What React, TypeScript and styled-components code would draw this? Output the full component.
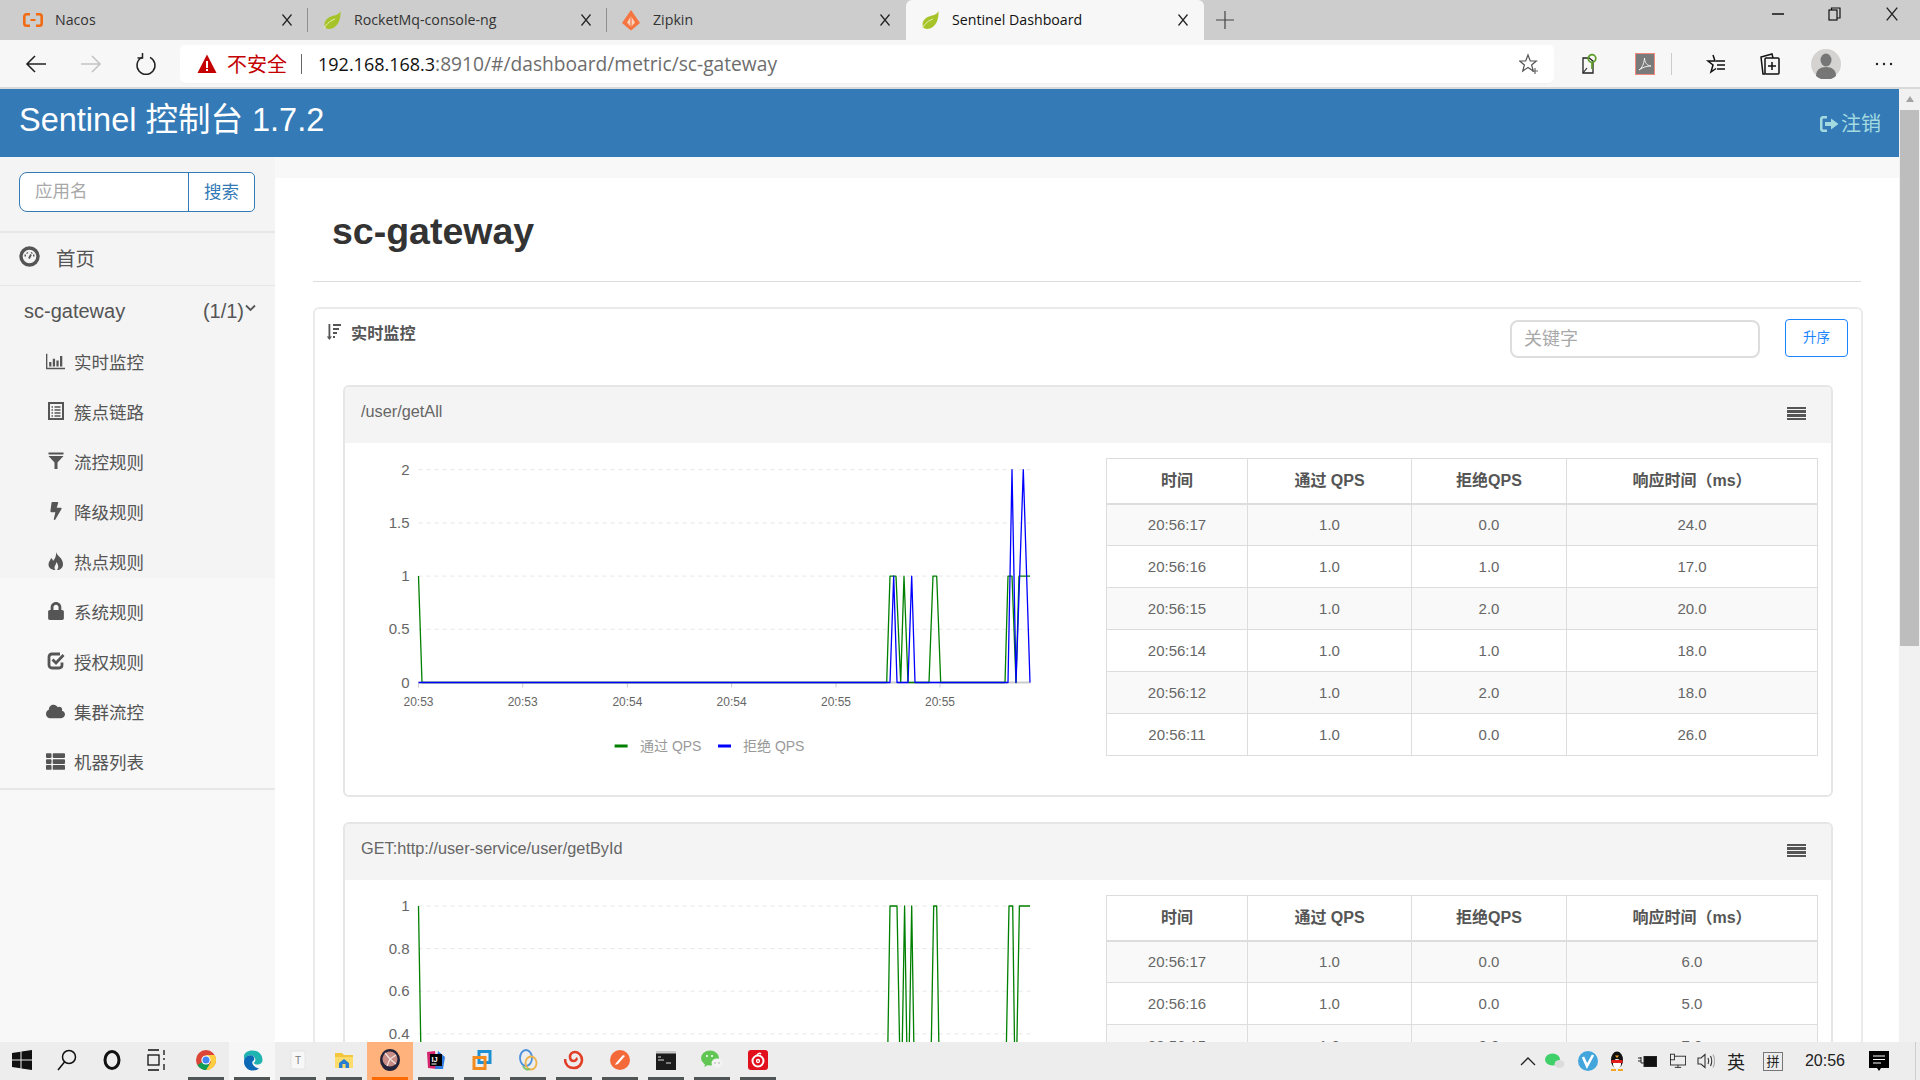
import React from 'react';
import styled, { createGlobalStyle } from 'styled-components';
import { FaBolt, FaLock, FaCloud, FaThList } from 'react-icons/fa';

const FONT = '"Liberation Sans", "Noto Sans CJK SC", sans-serif';
const UI_FONT = '"Open Sans", "Noto Sans CJK SC", sans-serif';

const Global = createGlobalStyle`
  html, body { margin: 0; padding: 0; height: 100%; overflow: hidden; background: #fff; }
  body { font-family: ${FONT}; color: #555; }
  * { box-sizing: border-box; }
`;

const Screen = styled.div`
  width: 1920px; height: 1080px; display: flex; flex-direction: column; overflow: hidden;
`;

/* browser chrome */
const TabStrip = styled.div`
  height: 40px; flex: none; background: #cdcdcd; display: flex; padding-left: 9px;
`;
const Tab = styled.div<{ $active?: boolean }>`
  width: ${p => (p.$active ? 298 : 299)}px; height: 40px; display: flex; align-items: center; padding-left: 14px;
  font-family: ${UI_FONT}; font-size: 14.2px; color: ${p => (p.$active ? '#111' : '#333')};
  background: ${p => (p.$active ? '#f7f7f7' : 'transparent')};
  border-radius: ${p => (p.$active ? '6px 6px 0 0' : '0')};
`;
const TabIcon = styled.span`
  width: 20px; height: 24px; margin-right: 12px; flex: none; display: flex; align-items: center; justify-content: center;
`;
const TabLabel = styled.span` flex: 1; white-space: nowrap; margin-bottom: 2px; `;
const TabClose = styled.span`
  width: 12px; height: 12px; margin-right: 14px; flex: none; display: flex;
`;
const TabSeparator = styled.span<{ $on?: boolean }>`
  width: 1px; height: 24px; flex: none; background: ${p => (p.$on ? '#8f8f8f' : 'transparent')};
`;
const NewTab = styled.div`
  width: 42px; display: flex; align-items: center; justify-content: center; color: #444;
`;
const WindowButtons = styled.div`
  margin-left: auto; display: flex; height: 28px; align-items: center;
`;
const WindowButton = styled.div`
  width: 57px; display: flex; justify-content: center; align-items: center;
`;

const AddressBar = styled.div`
  height: 49px; flex: none; background: #f7f7f7; border-bottom: 2px solid #d9d9d9; display: flex; align-items: center;
  padding: 0 0 0 8px;
`;
const NavButton = styled.div`
  width: 55px; display: flex; justify-content: center; align-items: center;
`;
const UrlBox = styled.div`
  width: 1374px; height: 38px; margin-left: 7px; background: #fff; border-radius: 5px; display: flex; align-items: center;
  padding: 0 15px 0 17px; box-shadow: 0 1px 1px rgba(0,0,0,.03);
`;
const NotSecure = styled.span`
  color: #c40000; font-size: 20px; margin-left: 10px; white-space: nowrap;
`;
const UrlDivider = styled.span` width: 1px; height: 20px; background: #666; margin: 0 16px 0 14px; `;
const UrlHost = styled.span` font-family: ${UI_FONT}; font-size: 18px; color: #111; white-space: nowrap; `;
const UrlPath = styled.span` font-family: ${UI_FONT}; font-size: 19.2px; color: #6d6d6d; white-space: nowrap; flex: 1; `;
const ToolIcons = styled.div` display: flex; align-items: center; margin-left: 8px; `;
const ToolSlot = styled.div<{ $w?: number }>`
  width: ${p => p.$w ?? 55}px; display: flex; justify-content: center; align-items: center;
`;
const ToolDivider = styled.div` width: 1px; height: 22px; background: #ccc; margin: 0 15px 0 -1px; `;

const Viewport = styled.div` flex: 1; min-height: 0; display: flex; `;
const Page = styled.div` flex: 1; min-width: 0; display: flex; flex-direction: column; overflow: hidden; `;
const Scrollbar = styled.div`
  width: 21px; flex: none; background: #f1f1f1; display: flex; flex-direction: column; align-items: center; padding-top: 7px;
`;
const ScrollArrow = styled.div`
  width: 0; height: 0; border-left: 4px solid transparent; border-right: 4px solid transparent; border-bottom: 6px solid #a3a3a3;
`;
const ScrollThumb = styled.div` width: 19px; height: 536px; margin-top: 8px; background: #bdbdbd; `;

/* app */
const Header = styled.header`
  height: 68px; flex: none; background: #337ab7; display: flex; align-items: flex-start; justify-content: space-between;
  padding: 12px 18px 0 19px;
`;
const Brand = styled.div` color: #fff; font-size: 32.5px; line-height: 38px; white-space: nowrap; `;
const Logout = styled.div`
  display: flex; align-items: center; color: #a3dae0; font-size: 20px; line-height: 24px; margin-top: 11px; gap: 2px;
`;
const Body = styled.div` flex: 1; min-height: 0; display: flex; `;
const Sidebar = styled.aside`
  width: 275px; flex: none; background: linear-gradient(#f4f4f4 421px, #f8f8f8 421px);
`;
const SearchGroup = styled.div`
  display: flex; height: 40px; width: 236px; margin: 15px 0 19px 19px; border: 1px solid #337ab7; border-radius: 8px 5px 5px 8px; background: #fff; overflow: hidden;
`;
const SearchInput = styled.div`
  flex: 1; padding-left: 15px; font-size: 17.5px; line-height: 36px; color: #a8a8a8; border-right: 1px solid #337ab7;
`;
const SearchButton = styled.div`
  width: 65px; text-align: center; font-size: 17.5px; line-height: 38px; color: #337ab7;
`;
const SideNav = styled.nav`
  border-top: 2px solid #e7e7e7; border-bottom: 2px solid #e7e7e7; padding-bottom: 2px;
`;
const HomeRow = styled.div`
  height: 53px; display: flex; align-items: center; border-bottom: 1px solid #e7e7e7; padding: 0 0 5px 19px; font-size: 19.5px; color: #555;
`;
const HomeLabel = styled.span` margin-left: 16px; margin-top: 2px; `;
const GroupRow = styled.div`
  height: 50px; display: flex; align-items: center; padding: 0 19px 0 24px; font-size: 20px; color: #555;
`;
const GroupCount = styled.span` margin-left: auto; `;
const Chevron = styled.svg` width: 11px; height: 8px; margin: 0 0 6px 1px; `;
const SideItem = styled.div`
  height: 50px; display: flex; align-items: center; font-size: 17.5px; color: #555; padding-left: 46px;
`;
const SideIcon = styled.span`
  width: 19px; display: flex; justify-content: center; margin-right: 9px; color: #555; font-size: 18px;
`;

const Main = styled.main` flex: 1; min-width: 0; background: #f8f8f8; padding-top: 21px; display: flex; `;
const Content = styled.div` flex: 1; min-width: 0; background: #fff; padding: 0 36px 0 38px; `;
const TitleBar = styled.div` height: 104px; margin-right: 2px; border-bottom: 1px solid #ddd; padding: 29px 0 0 19px; `;
const Title = styled.h1` margin: 0; font-size: 37.5px; line-height: 48px; font-weight: 700; color: #333; `;
const Panel = styled.section`
  margin-top: 25px; border: 2px solid #eaeaea; border-bottom: none; border-radius: 6px 6px 0 0; padding: 0 28px 0 28px;
`;
const PanelTop = styled.div` display: flex; align-items: flex-start; height: 76px; padding-top: 11px; margin: 0 -15px 0 -15px; `;
const PanelTitle = styled.div`
  display: flex; align-items: center; gap: 10px; font-size: 16.2px; font-weight: 700; color: #555; height: 26px; margin: -1px 0 0 -2px;
`;
const KeywordInput = styled.div`
  width: 250px; height: 38px; margin-left: auto; margin-right: -1px; border: 2px solid #ddd; border-radius: 8px; padding-left: 12px;
  color: #a8a8a8; font-size: 18px; line-height: 34px;
`;
const SortButton = styled.div`
  width: 63px; height: 38px; margin-left: 26px; margin-top: -1px; border: 1px solid #1a85ff; border-radius: 4px; color: #1a85ff;
  text-align: center; font-size: 13.5px; line-height: 36px;
`;
const Card = styled.article`
  border: 2px solid #e6e6e6; border-radius: 6px; margin-bottom: 25px;
`;
const CardHead = styled.div`
  height: 56px; background: #f4f4f4; display: flex; align-items: center; justify-content: space-between; padding: 0 25px 7px 16px;
  font-size: 16.3px; color: #666; border-radius: 4px 4px 0 0;
`;
const Hamburger = styled.div`
  width: 19px; height: 14px; display: flex; flex-direction: column; justify-content: space-between; margin-top: 4px;
`;
const HamburgerBar = styled.span` height: 2.5px; background: #555; `;
const CardBody = styled.div` display: flex; padding: 15px 11px 39px 0; align-items: flex-start; `;
const ChartSlot = styled.div` width: 761px; flex: none; height: 297px; position: relative; `;
const ChartSvg = styled.svg` position: absolute; left: 0; top: -15px; overflow: visible; `;
const Table = styled.table`
  width: 712px; border-collapse: collapse; table-layout: fixed; font-size: 15px; color: #666; text-align: center;
`;
const Th = styled.th<{ $w?: number }>`
  height: 45px; border: 1px solid #ddd; border-bottom: 2px solid #ddd; padding: 0 0 3px; font-size: 16px; font-weight: 700; color: #555;
  width: ${p => (p.$w ? `${p.$w}px` : 'auto')};
`;
const Tr = styled.tr<{ $odd: boolean }>` background: ${p => (p.$odd ? '#f9f9f9' : '#fff')}; `;
const Td = styled.td` height: 42px; border: 1px solid #ddd; padding: 0; `;

/* taskbar */
const Taskbar = styled.div` height: 38px; flex: none; background: #ededed; display: flex; `;
const StartSlot = styled.div`
  width: 45px; display: flex; align-items: center; justify-content: center; padding: 0 1px 2px 0;
`;
const Apps = styled.div` display: flex; margin-left: 3px; `;
const AppSlot = styled.div<{ $state?: 'active' | 'light' }>`
  width: 46px; display: flex; align-items: center; justify-content: center; position: relative; padding-bottom: 2px;
  background: ${p => (p.$state === 'active' ? '#ffb27c' : p.$state === 'light' ? '#f6f6f6' : 'transparent')};
`;
const RunBar = styled.span<{ $orange?: boolean }>`
  position: absolute; left: 5px; right: 5px; bottom: 0; height: 3px; background: ${p => (p.$orange ? '#ff6a00' : '#4f5554')};
`;
const Tray = styled.div`
  margin-left: auto; display: flex; align-items: center; padding-right: 4px; color: #222;
`;
const TraySlot = styled.div<{ $w: number; $size?: number }>`
  width: ${p => p.$w}px; display: flex; justify-content: center; align-items: center; font-size: ${p => p.$size ?? 15}px; white-space: nowrap;
`;
const TrayEdge = styled.span` width: 1px; height: 38px; background: #cfcfcf; margin-left: 7px; `;
const ImeBox = styled.span`
  width: 20px; height: 19px; border: 1px solid #777; font-size: 13px; line-height: 17px; text-align: center; display: block;
`;
const ImeLang = styled.span` font-size: 18px; `;

/* icons */
const Leaf = () => (
  <svg width="21" height="20" viewBox="0 0 20 20">
    <path d="M18.5 1C17 5 13 5 9 6.5 4 8.5 1.5 12 3 17c1 2 4 2.500 7 1.500 6-2 9-9 8.500-17.500z" fill="#a6c42a" />
    <path d="M2 18.500C5 13 9 10.500 13 9" stroke="#e9f0b5" strokeWidth="1" fill="none" />
  </svg>
);
const NacosIcon = () => (
  <svg width="20" height="14" viewBox="0 0 20 14" fill="none" stroke="#f26a12" strokeWidth="2.600">
    <path d="M7 1.300H3.500c-1.200 0-2.200 1-2.200 2.200v7c0 1.200 1 2.200 2.200 2.200H7M13 1.300h3.500c1.200 0 2.200 1 2.200 2.200v7c0 1.200-1 2.200-2.200 2.200H13" />
    <path d="M7.500 7h5" strokeWidth="2" />
  </svg>
);
const ZipkinIcon = () => (
  <svg width="20" height="22" viewBox="0 0 20 22">
    <path d="M10 1l9 13-9 7.500L1 14z" fill="#f5743f" />
    <path d="M10 7l4 6.500-4 4.500-4-4.500z" fill="#fbd3bf" />
    <path d="M10 6v13" stroke="#f5743f" strokeWidth="1.200" />
  </svg>
);
const Cross = ({ c = '#333', s = 12 }: { c?: string; s?: number }) => (
  <svg width={s} height={s} viewBox="0 0 12 12" stroke={c} strokeWidth="1.200"><path d="M1.500 0.500l9 11M10.500 0.500l-9 11" /></svg>
);
const ArrowL = ({ c = '#222' }: { c?: string }) => (
  <svg width="22" height="20" viewBox="0 0 22 20" fill="none" stroke={c} strokeWidth="1.600"><path d="M21 10H2M10 2l-8 8 8 8" /></svg>
);
const ArrowR = ({ c = '#c4c4c4' }: { c?: string }) => (
  <svg width="22" height="20" viewBox="0 0 22 20" fill="none" stroke={c} strokeWidth="1.600"><path d="M1 10h19M12 2l8 8-8 8" /></svg>
);
const Refresh = () => (
  <svg width="22" height="24" viewBox="0 0 22 24" fill="none" stroke="#222" strokeWidth="1.500">
    <path d="M7 5.300a9 9 0 1 0 8 0" /><path d="M7.500 1v5H2.500" />
  </svg>
);
const WarnTriangle = () => (
  <svg width="20" height="20" viewBox="0 0 20 20">
    <path d="M10 0.500l9.500 18.500H0.500z" fill="#c40000" />
    <path d="M9 7h2v7H9zM9 15h2v2H9z" fill="#fff" />
  </svg>
);
const StarPlus = () => (
  <svg width="20" height="22" viewBox="0 0 20 22" fill="none" stroke="#555" strokeWidth="1.200">
    <path d="M9 2l2.300 6h6l-4.700 4 1.700 6-5.300-3.500L3.700 18l1.700-6L0.700 8h6z" />
    <path d="M16 15v6M13 18h6" stroke="#666" />
  </svg>
);
const ProfileKey = () => (
  <svg width="18" height="24" viewBox="0 0 18 24" fill="none">
    <path d="M2 6h6l4 3v12H2z" stroke="#222" strokeWidth="1.300" />
    <circle cx="11" cy="6.500" r="3.800" stroke="#5b9b25" strokeWidth="1.700" />
    <path d="M11 10.500V17" stroke="#5b9b25" strokeWidth="1.700" />
    <path d="M2 21l4-5" stroke="#222" strokeWidth="1.200" />
  </svg>
);
const PdfIcon = () => (
  <svg width="20" height="22" viewBox="0 0 20 22">
    <rect x="0.500" y="0.500" width="19" height="21" fill="#7a7a7a" stroke="#f08a7a" />
    <path d="M4 17c3-2 5-6 5.500-12 .3 5 2.500 7.500 6.500 8-4 0-8 1-12 4z" fill="none" stroke="#eee" strokeWidth="1" />
  </svg>
);
const FavList = () => (
  <svg width="22" height="22" viewBox="0 0 22 22" fill="none" stroke="#111" strokeWidth="1.500">
    <path d="M9 2l2 6h-7l5 4-2 7 5-3.500" />
    <path d="M12 8h9M13 12h8M13 16h8" />
  </svg>
);
const Collections = () => (
  <svg width="22" height="24" viewBox="0 0 22 24" fill="none" stroke="#111" strokeWidth="1.500">
    <rect x="6" y="6" width="14" height="16" rx="1" />
    <path d="M13 10v8M9 14h8" />
    <path d="M6 22H4L2 5l11-3 1 4" />
  </svg>
);
const Avatar = () => (
  <svg width="30" height="30" viewBox="0 0 30 30">
    <circle cx="15" cy="15" r="15" fill="#d4d3d1" />
    <ellipse cx="15" cy="11" rx="5.500" ry="6.500" fill="#767676" />
    <path d="M5 27c0-6 4-9 10-9s10 3 10 9a15 15 0 0 1-20 0z" fill="#767676" />
  </svg>
);
const Dots = () => (
  <svg width="18" height="4" viewBox="0 0 18 4" fill="#222">
    <circle cx="2" cy="2" r="1.200" /><circle cx="9" cy="2" r="1.200" /><circle cx="16" cy="2" r="1.200" />
  </svg>
);
const LogoutIcon = () => (
  <svg width="20" height="18" viewBox="0 0 20 18" fill="#a3dae0">
    <path d="M8 1H4C2 1 1 2.500 1 4v10c0 1.500 1 3 3 3h4v-2.500H4.500c-.6 0-1-.4-1-1v-9c0-.6.4-1 1-1H8z" />
    <path d="M12 3.500L19.500 9 12 14.500V11H6V7h6z" />
  </svg>
);
const GaugeIcon = () => (
  <svg width="21" height="21" viewBox="0 0 21 21">
    <circle cx="10.500" cy="10.500" r="8.500" fill="#f4f4f4" stroke="#555" strokeWidth="3.400" />
    <path d="M5.500 9.500h1.500M8 6.500l.6 1M13 6.500l-.6 1M15.500 9.500H14" stroke="#555" strokeWidth="1.800" />
    <path d="M10 12.500l2-4" stroke="#555" strokeWidth="1.800" />
  </svg>
);
const StatsIcon = () => (
  <svg width="21" height="17" viewBox="0 0 21 17" fill="#555">
    <path d="M0 0h1.500v15.500H21V17H0z" />
    <path d="M3.500 9h2.500v5H3.500zM7.500 5.500H10V14H7.500zM11.500 7.500H14V14h-2.500zM15.500 2.500H18V14h-2.500z" />
  </svg>
);
const ListAltIcon = () => (
  <svg width="16" height="18" viewBox="0 0 16 18" fill="none" stroke="#555">
    <rect x="1" y="1" width="14" height="16" strokeWidth="2" />
    <path d="M3.500 5h1.500M3.500 8h1.500M3.500 11h1.500M3.500 14h1.500M6.500 5h6M6.500 8h6M6.500 11h6M6.500 14h6" strokeWidth="1.500" />
  </svg>
);
const FunnelIcon = () => (
  <svg width="16" height="18" viewBox="0 0 16 18" fill="#555">
    <path d="M0.500 0.500h15v2h-15z" />
    <path d="M0.500 4h15L9.500 10.500V17h-3v-6.500z" />
  </svg>
);
const FlameIcon = () => (
  <svg width="16" height="18" viewBox="0 0 16 18" fill="#555">
    <path d="M8 0c1 4 7 6 7 12 0 4-3 6-6 6 1.500-2 2-4-.5-8-.5 3-2 3.500-2 5.500 0 1 .5 2 1 2.500-4.500 0-7-2.500-7-5.500 0-3 2-4 2.500-6.500C4.500 7 5 8 5 9c2-2 3.500-5 3-9z" />
  </svg>
);
const CheckIcon = () => (
  <svg width="18" height="18" viewBox="0 0 18 18" fill="none" stroke="#555">
    <path d="M15 10.500V13c0 1.500-1 3-3 3H5c-2 0-3-1.500-3-3V5c0-2 1-3 3-3h8" strokeWidth="2.800" />
    <path d="M5.500 7.500L9 11l7.500-8" strokeWidth="2.800" />
  </svg>
);
const SortIcon = () => (
  <svg width="15" height="16" viewBox="0 0 15 16" fill="#555">
    <path d="M2.500 0h1.800v12.500H6L3.400 16 .8 12.500h1.700zM7 0h8v2H7zM7 4h6v2H7zM7 8h4v2H7zM7 12h2v2H7z" />
  </svg>
);

const AppIcons: React.ReactNode[] = [
  <svg key="chrome" width="20" height="20" viewBox="0 0 20 20"><circle cx="10" cy="10" r="10" fill="#db4437"/><path d="M10 10L1.300 15a10 10 0 0 0 13.700 3.600z" fill="#0f9d58"/><path d="M10 5h8.700A10 10 0 0 1 10 20l5-8z" fill="#ffcd40"/><circle cx="10" cy="10" r="4.600" fill="#fff"/><circle cx="10" cy="10" r="3.500" fill="#4285f4"/></svg>,
  <svg key="edge" width="21" height="21" viewBox="0 0 21 21"><path d="M10.500 0.500c6 0 10 4.500 10 9.500 0 3-2.500 4.500-5 4.500-2 0-4-1-3.500-2 1.500-1 2-3 .5-5-1-1.500-3-2.500-5-2C5 5.500 3 8 2.500 10 2 8 1 4.500 4 2.500 6 1 8 .5 10.500 .5z" fill="#1fb4b0"/><path d="M2.500 9c2-4 7-5 9-2.500 1.500 2 .5 4-1 5-1 2 1 5.500 6.500 7-2 1.500-4 2-6 2C5 20.500 0.500 15 2.500 9z" fill="#0c69b5"/></svg>,
  <svg key="t" width="18" height="20" viewBox="0 0 18 20"><rect x="2" y="1" width="14" height="18" fill="#f7f7f7" stroke="#e4e4e4"/><text x="9" y="14" textAnchor="middle" fontSize="10" fontFamily={FONT} fill="#777">T</text></svg>,
  <svg key="folder" width="20" height="20" viewBox="0 0 20 20"><path d="M1 3h7l2 2h9v13H1z" fill="#f5c63d"/><path d="M1 7h18v11H1z" fill="#fbdc6d"/><path d="M5 13l5-4 5 4v5H5z" fill="#2a7fd1"/><path d="M8.500 14h3v4h-3z" fill="#fbdc6d"/></svg>,
  <svg key="avatar" width="20" height="22" viewBox="0 0 20 22"><ellipse cx="10" cy="11" rx="10" ry="11" fill="#23233a"/><circle cx="10" cy="10" r="7.500" fill="#c98d85"/><path d="M10 10L5 4M10 10l6-4M10 10l-3 7M10 10l6 5" stroke="#efe3df" strokeWidth="1.200"/></svg>,
  <svg key="idea" width="20" height="20" viewBox="0 0 20 20"><path d="M1 2l8-1 2 18-9-1z" fill="#d6246e"/><path d="M12 1l7 6-2 12-8 0z" fill="#2d7be0"/><path d="M4 4h12v12H4z" fill="#000"/><text x="5.500" y="11.500" fontSize="7.500" fontWeight="700" fontFamily={FONT} fill="#fff">IJ</text><path d="M5.500 13.500h5v1h-5z" fill="#fff"/></svg>,
  <svg key="vm" width="20" height="20" viewBox="0 0 20 20" fill="none"><rect x="7" y="1.500" width="11" height="11" stroke="#1d8fd4" strokeWidth="3"/><rect x="2" y="7.500" width="11" height="11" stroke="#f28c1e" strokeWidth="3"/></svg>,
  <svg key="nav" width="20" height="22" viewBox="0 0 20 22" fill="none" strokeWidth="1.800"><ellipse cx="8" cy="9" rx="6" ry="8" stroke="#4a8fdc"/><ellipse cx="13" cy="14" rx="5.500" ry="6.500" stroke="#ecb44a"/><path d="M5 17a5 5 0 0 0 7 3" stroke="#7cc36c"/></svg>,
  <svg key="snail" width="20" height="20" viewBox="0 0 20 20" fill="none"><path d="M1 9c0 6 4 9 9 9 5 0 8-4 8-8S15 2 11 2C8 2 6 4 6 7s2 4 4 4 3-2 2-3" stroke="#e23d25" strokeWidth="2.600"/></svg>,
  <svg key="postman" width="20" height="20" viewBox="0 0 20 20"><circle cx="10" cy="10" r="10" fill="#f4693a"/><path d="M5 15l3-1 7-8-2-1-7 8z" fill="#fff"/></svg>,
  <svg key="term" width="20" height="19" viewBox="0 0 20 19"><rect width="20" height="19" fill="#1c1c1c"/><rect width="20" height="2.500" fill="#c9c9c9"/><path d="M2 6h3M2 9h6M10 12h5" stroke="#ddd" strokeWidth="1"/></svg>,
  <svg key="wechat" width="22" height="20" viewBox="0 0 22 20"><ellipse cx="9" cy="8" rx="9" ry="7.500" fill="#62c654"/><path d="M4 13l-.5 4 4-2.500z" fill="#62c654"/><ellipse cx="16" cy="13" rx="5.500" ry="4.500" fill="#f3f3f3"/><circle cx="14" cy="13" r=".8" fill="#aaa"/><circle cx="18" cy="13" r=".8" fill="#aaa"/><circle cx="6" cy="6" r="1" fill="#fff"/><circle cx="11" cy="6" r="1" fill="#fff"/></svg>,
  <svg key="netease" width="20" height="20" viewBox="0 0 20 20"><rect width="20" height="20" rx="3" fill="#e1101c"/><circle cx="10" cy="11" r="5.500" fill="none" stroke="#fff" strokeWidth="2"/><circle cx="10" cy="11" r="1.500" fill="none" stroke="#fff" strokeWidth="1.300"/><path d="M9 5c1-2 3-2 4-1" fill="none" stroke="#fff" strokeWidth="1.500"/></svg>,
];

/* charts */
const GX0 = 418.5;
type Pt = [number, number];

const green1: Pt[] = [[418.5, 1], [422, 0], [886.7, 0], [890, 1], [896, 1], [900.7, 0], [904, 1], [908, 0], [929, 0], [933, 1], [936.7, 1], [940.7, 0], [1005, 0], [1008, 1], [1012, 1], [1016, 0], [1019, 1], [1030, 1]];
const blue1: Pt[] = [[418.5, 0], [890, 0], [893.7, 1], [897, 0], [908, 0], [911.7, 1], [915, 0], [1008, 0], [1012, 2], [1016, 0], [1023.3, 2], [1030, 0]];
const green2: Pt[] = [[418.5, 1], [422, 0], [886.7, 0], [890, 1], [897, 1], [901, 0], [904.6, 1], [908, 0], [911.7, 1], [915, 0], [930, 0], [933.7, 1], [936.7, 1], [940, 0], [1005, 0], [1009, 1], [1012.7, 1], [1015.5, 0], [1019.4, 1], [1030, 1]];

const LABEL = { fontFamily: FONT };
const xTicks = [418.5, 522.7, 627.4, 731.6, 836, 940];
const xLabels = ['20:53', '20:53', '20:54', '20:54', '20:55', '20:55'];

const Chart = ({ yTicks, unit, zero, green, blue, showAxis }: { yTicks: number[]; unit: number; zero: number; green: Pt[]; blue?: Pt[]; showAxis: boolean }) => {
  const X = (v: number) => v - 343 - 2;
  const Y = (v: number) => zero - v * unit;
  const line = (pts: Pt[]) => pts.map(([x, v]) => `${X(x)},${Y(v)}`).join(' ');
  return (
    <ChartSvg width="761" height="350" viewBox="0 0 761 350">
      {yTicks.filter(v => v !== 0).map(v => (
        <line key={v} x1={X(GX0)} x2={X(1030.5)} y1={Y(v)} y2={Y(v)} stroke="#e6e6e6" strokeDasharray="4 4" />
      ))}
      {yTicks.map(v => (
        <text key={v} x={X(GX0) - 9} y={Y(v) + 5} textAnchor="end" fontSize="15" fill="#666" style={LABEL}>{v}</text>
      ))}
      {showAxis && (
        <>
          <line x1={X(GX0)} x2={X(1030.5)} y1={zero} y2={zero} stroke="#ccc" strokeWidth="2" />
          {xTicks.map((x, i) => (
            <g key={i}>
              <line x1={X(x)} x2={X(x)} y1={zero} y2={zero + 5} stroke="#ccc" />
              <text x={X(x)} y={zero + 23} textAnchor="middle" fontSize="12" fill="#666" style={LABEL}>{xLabels[i]}</text>
            </g>
          ))}
        </>
      )}
      <polyline points={line(green)} fill="none" stroke="#008000" strokeWidth="1.300" strokeLinejoin="round" />
      {blue && <polyline points={line(blue)} fill="none" stroke="#0000ff" strokeWidth="1.300" strokeLinejoin="round" />}
      {showAxis && (
        <>
          <rect x={X(614.6)} y={zero + 62} width="13" height="3" fill="#008000" />
          <text x={X(640)} y={zero + 68.500} fontSize="14" fill="#999" style={LABEL}>通过 QPS</text>
          <rect x={X(718)} y={zero + 62} width="13" height="3" fill="#0000ff" />
          <text x={X(743)} y={zero + 68.500} fontSize="14" fill="#999" style={LABEL}>拒绝 QPS</text>
        </>
      )}
    </ChartSvg>
  );
};

const tabs = [
  { name: 'Nacos', icon: <NacosIcon />, sep: true },
  { name: 'RocketMq-console-ng', icon: <Leaf />, sep: true },
  { name: 'Zipkin', icon: <ZipkinIcon />, sep: false },
  { name: 'Sentinel Dashboard', icon: <Leaf />, active: true },
];

const sideItems: { label: string; icon: React.ReactNode }[] = [
  { label: '实时监控', icon: <StatsIcon /> },
  { label: '簇点链路', icon: <ListAltIcon /> },
  { label: '流控规则', icon: <FunnelIcon /> },
  { label: '降级规则', icon: <FaBolt size={18} /> },
  { label: '热点规则', icon: <FlameIcon /> },
  { label: '系统规则', icon: <FaLock size={18} /> },
  { label: '授权规则', icon: <CheckIcon /> },
  { label: '集群流控', icon: <FaCloud size={19} /> },
  { label: '机器列表', icon: <FaThList size={19} /> },
];

const rows1 = [
  ['20:56:17', '1.0', '0.0', '24.0'],
  ['20:56:16', '1.0', '1.0', '17.0'],
  ['20:56:15', '1.0', '2.0', '20.0'],
  ['20:56:14', '1.0', '1.0', '18.0'],
  ['20:56:12', '1.0', '2.0', '18.0'],
  ['20:56:11', '1.0', '0.0', '26.0'],
];
const rows2 = [
  ['20:56:17', '1.0', '0.0', '6.0'],
  ['20:56:16', '1.0', '0.0', '5.0'],
  ['20:56:15', '1.0', '0.0', '7.0'],
];

const DataTable = ({ rows }: { rows: string[][] }) => (
  <Table>
    <thead>
      <tr>
        <Th $w={141}>时间</Th>
        <Th $w={164}>通过 QPS</Th>
        <Th $w={155}>拒绝QPS</Th>
        <Th>响应时间（ms）</Th>
      </tr>
    </thead>
    <tbody>
      {rows.map((r, i) => (
        <Tr key={r[0]} $odd={i % 2 === 0}>
          {r.map((c, j) => <Td key={j}>{c}</Td>)}
        </Tr>
      ))}
    </tbody>
  </Table>
);

const MetricCard = ({ title, rows, chart }: { title: string; rows: string[][]; chart: React.ReactNode }) => (
  <Card>
    <CardHead>
      <span>{title}</span>
      <Hamburger><HamburgerBar /><HamburgerBar /><HamburgerBar /><HamburgerBar /></Hamburger>
    </CardHead>
    <CardBody>
      <ChartSlot>{chart}</ChartSlot>
      <DataTable rows={rows} />
    </CardBody>
  </Card>
);

export default function App() {
  return (
    <Screen>
      <Global />
      <TabStrip>
        {tabs.map(t => (
          <Tab key={t.name} $active={t.active}>
            <TabIcon>{t.icon}</TabIcon>
            <TabLabel>{t.name}</TabLabel>
            <TabClose><Cross c="#222" /></TabClose>
            <TabSeparator $on={t.sep} />
          </Tab>
        ))}
        <NewTab>
          <svg width="18" height="18" viewBox="0 0 18 18" stroke="#444" strokeWidth="1.200"><path d="M9 0v18M0 9h18" /></svg>
        </NewTab>
        <WindowButtons>
          <WindowButton><svg width="12" height="2" viewBox="0 0 12 2"><path d="M0 1h12" stroke="#111" strokeWidth="1.500"/></svg></WindowButton>
          <WindowButton><svg width="13" height="14" viewBox="0 0 13 14" fill="none" stroke="#111" strokeWidth="1.200"><rect x="1" y="3" width="8" height="10"/><path d="M3.500 3V1H12v10H9"/></svg></WindowButton>
          <WindowButton><Cross c="#222" s={14} /></WindowButton>
        </WindowButtons>
      </TabStrip>
      <AddressBar>
        <NavButton><ArrowL /></NavButton>
        <NavButton><ArrowR /></NavButton>
        <NavButton><Refresh /></NavButton>
        <UrlBox>
          <WarnTriangle />
          <NotSecure>不安全</NotSecure>
          <UrlDivider />
          <UrlHost>192.168.168.3</UrlHost>
          <UrlPath>:8910/#/dashboard/metric/sc-gateway</UrlPath>
          <StarPlus />
        </UrlBox>
        <ToolIcons>
          <ToolSlot><ProfileKey /></ToolSlot>
          <ToolSlot><PdfIcon /></ToolSlot>
          <ToolDivider />
          <ToolSlot><FavList /></ToolSlot>
          <ToolSlot><Collections /></ToolSlot>
          <ToolSlot $w={58}><Avatar /></ToolSlot>
          <ToolSlot $w={58}><Dots /></ToolSlot>
        </ToolIcons>
      </AddressBar>
      <Viewport>
        <Page>
          <Header>
            <Brand>Sentinel 控制台 1.7.2</Brand>
            <Logout><LogoutIcon /><span>注销</span></Logout>
          </Header>
          <Body>
            <Sidebar>
              <SearchGroup>
                <SearchInput>应用名</SearchInput>
                <SearchButton>搜索</SearchButton>
              </SearchGroup>
              <SideNav>
                <HomeRow><GaugeIcon /><HomeLabel>首页</HomeLabel></HomeRow>
                <GroupRow>
                  <span>sc-gateway</span>
                  <GroupCount>(1/1)</GroupCount>
                  <Chevron viewBox="0 0 11 8" fill="none" stroke="#555" strokeWidth="1.800"><path d="M1 1.500l4.500 4.500L10 1.500" /></Chevron>
                </GroupRow>
                {sideItems.map(it => (
                  <SideItem key={it.label}>
                    <SideIcon>{it.icon}</SideIcon>
                    <span>{it.label}</span>
                  </SideItem>
                ))}
              </SideNav>
            </Sidebar>
            <Main>
              <Content>
                <TitleBar><Title>sc-gateway</Title></TitleBar>
                <Panel>
                  <PanelTop>
                    <PanelTitle><SortIcon /><span>实时监控</span></PanelTitle>
                    <KeywordInput>关键字</KeywordInput>
                    <SortButton>升序</SortButton>
                  </PanelTop>
                  <MetricCard
                    title="/user/getAll"
                    rows={rows1}
                    chart={<Chart showAxis yTicks={[0, 0.5, 1, 1.5, 2]} unit={106.4} zero={239.5} green={green1} blue={blue1} />}
                  />
                  <MetricCard
                    title="GET:http://user-service/user/getById"
                    rows={rows2}
                    chart={<Chart showAxis={false} yTicks={[0.4, 0.6, 0.8, 1]} unit={213} zero={239} green={green2} />}
                  />
                </Panel>
              </Content>
            </Main>
          </Body>
        </Page>
        <Scrollbar>
          <ScrollArrow />
          <ScrollThumb />
        </Scrollbar>
      </Viewport>
      <Taskbar>
        <StartSlot><svg width="20" height="20" viewBox="0 0 20 20" fill="#111"><path d="M0 3l8.500-1.200v7.700H0zM9.500 1.600L20 0v9.500H9.500zM0 10.500h8.500v7.700L0 17zM9.500 10.500H20V20L9.500 18.400z"/></svg></StartSlot>
        <StartSlot><svg width="20" height="22" viewBox="0 0 20 22" fill="none" stroke="#111" strokeWidth="1.500"><circle cx="12" cy="8" r="6.500"/><path d="M7.500 13L1 21"/></svg></StartSlot>
        <StartSlot><svg width="20" height="22" viewBox="0 0 20 22" fill="none" stroke="#111" strokeWidth="3"><ellipse cx="10" cy="11" rx="7" ry="8.500"/></svg></StartSlot>
        <StartSlot><svg width="20" height="22" viewBox="0 0 20 22" fill="none" stroke="#111" strokeWidth="1.300"><path d="M1 1h11M1 21h11M17 1v5M17 9v2"/><rect x="1" y="6" width="11" height="10"/><path d="M17 15v6"/></svg></StartSlot>
        <Apps>
          {AppIcons.map((ic, i) => (
            <AppSlot key={i} $state={i === 1 ? 'light' : i === 4 ? 'active' : undefined}>
              {ic}
              <RunBar $orange={i === 4} />
            </AppSlot>
          ))}
        </Apps>
        <Tray>
          <TraySlot $w={28}><svg width="16" height="10" viewBox="0 0 16 10" fill="none" stroke="#222" strokeWidth="1.300"><path d="M1 9l7-7 7 7"/></svg></TraySlot>
          <TraySlot $w={26}><svg width="20" height="16" viewBox="0 0 20 16"><ellipse cx="7.500" cy="6.500" rx="7.500" ry="6" fill="#3fd06a"/><ellipse cx="14.500" cy="11" rx="5" ry="4" fill="#dcdcdc"/></svg></TraySlot>
          <TraySlot $w={40}><svg width="20" height="20" viewBox="0 0 20 20"><circle cx="10" cy="10" r="10" fill="#42a5dc"/><path d="M5 6l4 9 6-11" fill="none" stroke="#fff" strokeWidth="2.600"/></svg></TraySlot>
          <TraySlot $w={18}><svg width="16" height="20" viewBox="0 0 16 20"><ellipse cx="8" cy="9" rx="6" ry="8.500" fill="#111"/><ellipse cx="8" cy="13" rx="4" ry="5" fill="#fff"/><path d="M2.500 9h11v3h-11z" fill="#e31b1b"/><path d="M6 4.500h4L8 7z" fill="#f5a623"/><path d="M2 18h5v2H2zM9 18h5v2H9z" fill="#f5a623"/></svg></TraySlot>
          <TraySlot $w={44}><svg width="20" height="13" viewBox="0 0 20 13" fill="none" stroke="#222"><rect x="6" y="1.500" width="12.500" height="10" fill="#111"/><path d="M0 3h3M0 6h3M3 2v6h3"/></svg></TraySlot>
          <TraySlot $w={16}><svg width="20" height="18" viewBox="0 0 20 18" fill="none" stroke="#222" strokeWidth="1.100"><rect x="0.500" y="3" width="19" height="11"/><path d="M10 14v3M6 17h8"/><rect x="0.500" y="0.500" width="5" height="7" fill="#ededed"/></svg></TraySlot>
          <TraySlot $w={40}><svg width="18" height="16" viewBox="0 0 18 16" fill="none" stroke="#333" strokeWidth="1.100"><path d="M1 5h3l4-3.500v13L4 11H1z"/><path d="M11 5c1 2 1 4 0 6M13.500 3c1.500 3 1.500 7 0 10" /><path d="M16 1.500c2 4 2 9 0 13" stroke="#aaa"/></svg></TraySlot>
          <TraySlot $w={20}><ImeLang>英</ImeLang></TraySlot>
          <TraySlot $w={54}><ImeBox>拼</ImeBox></TraySlot>
          <TraySlot $w={50} $size={16}>20:56</TraySlot>
          <TraySlot $w={58}><svg width="20" height="20" viewBox="0 0 20 20"><path d="M0 0h20v17h-8l-2 3-2-3H0z" fill="#000"/><path d="M4 5h12M4 8.500h12M4 12h8" stroke="#fff" strokeWidth="1.100"/></svg></TraySlot>
          <TrayEdge />
        </Tray>
      </Taskbar>
    </Screen>
  );
}
